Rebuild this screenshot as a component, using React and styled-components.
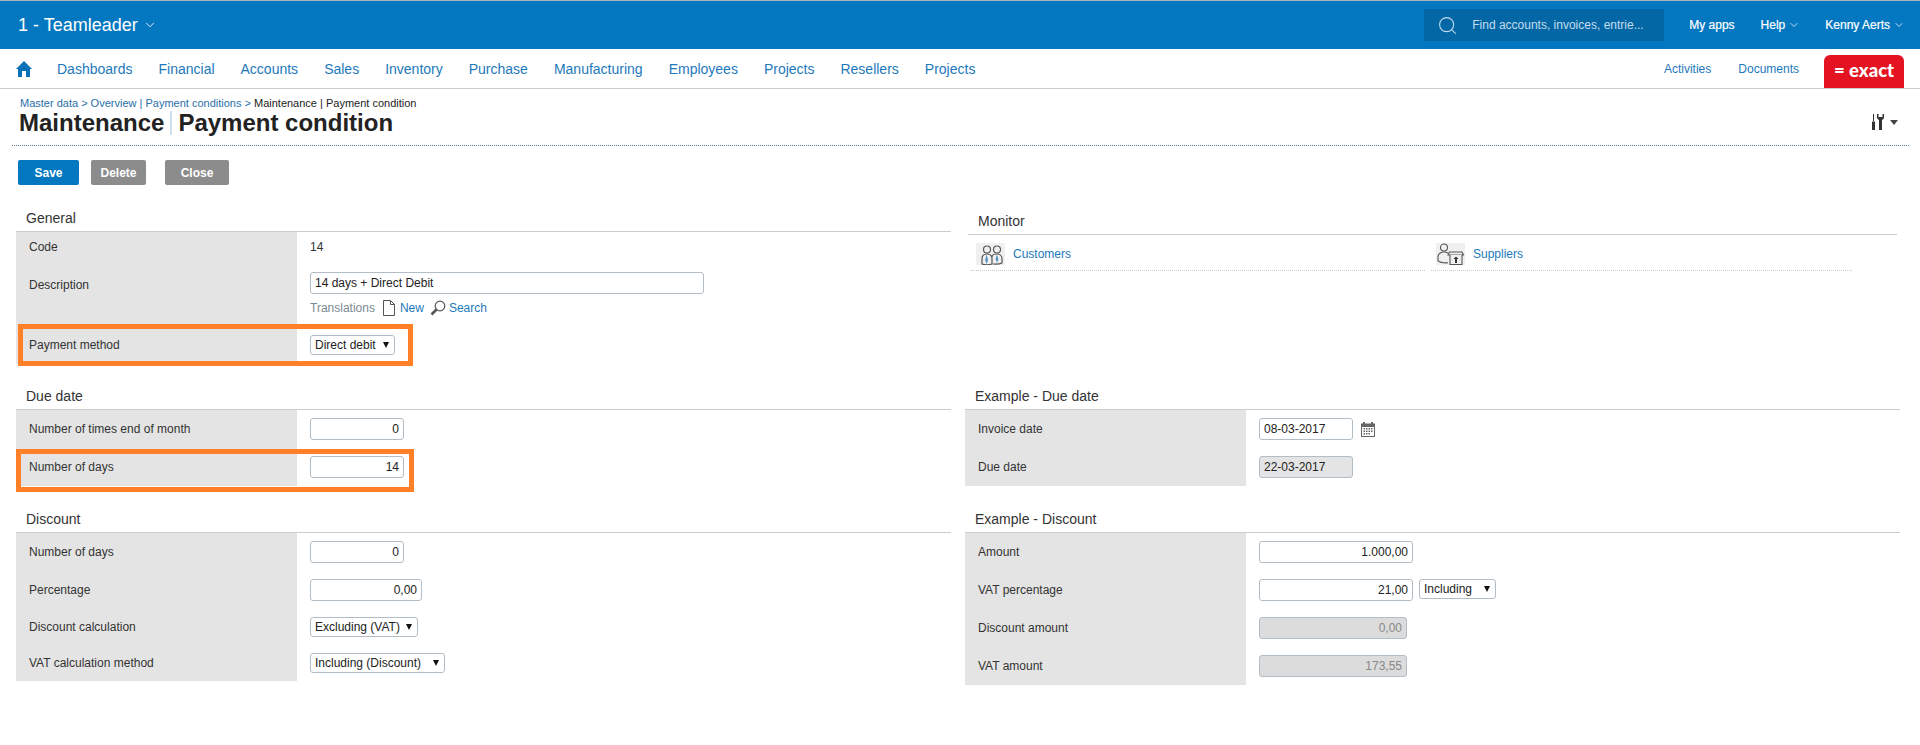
import styled, { createGlobalStyle } from "styled-components"
import { ChevronDown, Search } from "lucide-react"

const GlobalStyle = createGlobalStyle`
html, body {
  margin: 0;
  background: #fff;
  font-family: "Liberation Sans", Arial, sans-serif;
  color: #333;
}
* { box-sizing: border-box; }
`

const TopBar = styled.header`
  display: flex;
  align-items: center;
  height: 49px;
  padding: 0 15px 0 18px;
  background: #0377bf;
  border-top: 1px solid #aab4ba;
  color: #fff;
`
const Company = styled.div`
  display: flex;
  align-items: center;
  gap: 5px;
  font-size: 18px;
  flex: 1;
`
const SearchBox = styled.div`
  display: flex;
  align-items: center;
  gap: 14px;
  width: 240px;
  height: 32px;
  padding-left: 13px;
  background: #0367a6;
  color: #c4dcec;
  font-size: 12px;
`
const TopLink = styled.a`
  display: flex;
  align-items: center;
  gap: 3px;
  margin-left: ${({ $left }) => $left}px;
  font-size: 12px;
  font-weight: 400;
  -webkit-text-stroke: 0.2px #fff;
`

const NavBar = styled.nav`
  display: flex;
  height: 40px;
  padding: 0 16px;
  border-bottom: 1px solid #ccc;
  background: #fff;
`
const NavItems = styled.div`
  display: flex;
  align-items: center;
  gap: 26px;
  flex: 1;
`
const HomeLink = styled.a`
  display: flex;
  width: 16px;
  margin-right: -1px;
`
const NavLink = styled.a`
  color: #1d79bb;
  font-size: 14px;
`
const NavRight = styled.div`
  display: flex;
  align-items: center;
  gap: 27px;
  margin-right: 25px;
`
const SmallNavLink = styled.a`
  color: #1d79bb;
  font-size: 12px;
`
const ExactLogo = styled.div`
  align-self: flex-end;
  width: 80px;
  height: 33px;
  border-radius: 6px 6px 0 0;
  background: #e31322;
  color: #fff;
  font-family: "Lato", "Liberation Sans", sans-serif;
  font-weight: 900;
  font-size: 18.5px;
  line-height: 31px;
  text-align: center;
  white-space: pre;
`

const PageHead = styled.div`
  display: flex;
  justify-content: space-between;
  margin: 0 11px 0 12px;
  padding: 7px 11px 9px 8px;
  border-bottom: 1px dotted #5f7f95;
`
const Crumbs = styled.div`
  font-size: 11px;
  line-height: 14px;
  color: #222;
`
const CrumbLink = styled.a`
  color: #2a6fa8;
`
const Title = styled.h1`
  display: flex;
  align-items: center;
  margin: 0 0 0 -1px;
  font-size: 24px;
  line-height: 26px;
  font-weight: 700;
  color: #222;
`
const TitleBar = styled.span`
  width: 2px;
  height: 24px;
  margin: 0 6px;
  background: #cfdfeb;
`
const ToolsButton = styled.div`
  display: flex;
  align-items: center;
  gap: 6px;
  height: 16px;
  margin-top: 18px;
`
const Caret = styled.span`
  width: 0;
  height: 0;
  border-left: 4px solid transparent;
  border-right: 4px solid transparent;
  border-top: 5px solid #444;
`

const ButtonRow = styled.div`
  display: flex;
  padding: 14px 0 0 18px;
`
const Button = styled.button`
  width: ${({ $width }) => $width}px;
  height: 25px;
  margin-left: ${({ $left }) => $left || 0}px;
  border: 0;
  border-radius: 2px;
  background: ${({ $primary }) => ($primary ? "#0377bf" : "#8c8c8c")};
  color: #fff;
  font-family: inherit;
  font-size: 12px;
  font-weight: 700;
`

const Columns = styled.main`
  display: grid;
  grid-template-columns: 935px 935px;
  grid-template-rows: 178px 123px auto;
  column-gap: 14px;
  margin-top: 19px;
  padding-left: 16px;
`
const Section = styled.section`
  margin: ${({ $inset }) => ($inset ? "2px 3px 0" : "0")};
`
const SectionTitle = styled.h2`
  margin: 0;
  height: ${({ $tall }) => ($tall ? 29 : 28)}px;
  padding-left: 10px;
  border-bottom: 1px solid #ccc;
  font-size: 14px;
  line-height: ${({ $tall }) => ($tall ? 30 : 29)}px;
  font-weight: 400;
  color: #333;
`
const Row = styled.div`
  position: relative;
  display: flex;
  height: ${({ $height }) => $height || 38}px;
`
const Label = styled.div`
  display: flex;
  align-items: ${({ $top }) => ($top ? "flex-start" : "center")};
  width: 281px;
  padding: ${({ $top }) => $top || 0}px 0 0 13px;
  background: #e4e4e4;
  font-size: 12px;
  color: #333;
`
const Value = styled.div`
  padding-left: 13px;
  flex: 1;
  display: flex;
  align-items: ${({ $top }) => ($top ? "flex-start" : "center")};
  flex-direction: ${({ $stack }) => ($stack ? "column" : "row")};
  padding-top: ${({ $top }) => $top || 0}px;
  font-size: 12px;
  color: #333;
`
const Input = styled.input`
  width: ${({ $width }) => $width}px;
  height: 22px;
  padding: 0 4px;
  border: 1px solid #b3bdc5;
  border-radius: 3px;
  background: ${({ $disabled, $dark }) => ($dark ? "#e4e4e4" : $disabled ? "#dcdcdc" : "#fff")};
  color: ${({ $disabled }) => ($disabled ? "#888" : "#222")};
  font-family: inherit;
  font-size: 12px;
  text-align: ${({ $right }) => ($right ? "right" : "left")};
  outline: 0;
`
const SelectWrap = styled.span`
  position: relative;
  display: inline-flex;
  margin: ${({ $margin }) => $margin || 0};
  &::after {
    content: "";
    position: absolute;
    top: 7px;
    right: 6px;
    border-left: 3.5px solid transparent;
    border-right: 3.5px solid transparent;
    border-top: 6px solid #111;
    pointer-events: none;
  }
`
const SelectBox = styled.select`
  width: ${({ $width }) => $width}px;
  height: 20px;
  padding: 0 0 0 4px;
  border: 1px solid #b3bdc5;
  border-radius: 3px;
  background: #fff;
  appearance: none;
  color: #222;
  font-family: inherit;
  font-size: 12px;
  outline: 0;
`
const Translations = styled.div`
  display: flex;
  align-items: center;
  height: 14px;
  margin-top: 7px;
  font-size: 12px;
  color: #7d8a93;
`
const BlueLink = styled.a`
  color: #1d79bb;
  font-size: ${({ $size }) => $size || 12}px;
`
const TranslateIcon = styled.svg`
  flex: none;
  margin: ${({ $margin }) => $margin};
`
const Highlight = styled.div`
  position: absolute;
  left: ${({ $x }) => $x}px;
  top: ${({ $y }) => $y}px;
  width: ${({ $w }) => $w}px;
  height: ${({ $h }) => $h}px;
  border: 5px solid #ff8027;
  pointer-events: none;
`
const MonitorGrid = styled.div`
  display: grid;
  grid-template-columns: 454px 421px;
  column-gap: 6px;
  margin-left: 3px;
`
const MonitorItem = styled.a`
  display: flex;
  align-items: center;
  gap: 8px;
  padding: 8px 0 5px 5px;
  border-bottom: 1px dotted #ccc;
  color: #1d79bb;
  font-size: 12px;
`
const MonitorIcon = styled.span`
  display: flex;
  width: 29px;
  height: 22px;
  background: #f0f0f0;
`
const CalendarWrap = styled.span`
  display: flex;
  margin-left: 7px;
`

const HomeIcon = () => (
  <svg width="16" height="16" viewBox="0 0 16 16" fill="#0a70b8">
    <path d="M8 0 16 8H14V16H10V10H6V16H2V8H0Z" />
  </svg>
)

const ToolsIcon = () => (
  <svg width="12" height="16" viewBox="0 0 12 16" fill="#333">
    <path d="M1 0H2V7H1ZM0 7.5H3V16H0Z" />
    <path d="M5 0V3C5 4.5 6 5.5 7 6V16H10V6C11 5.5 12 4.5 12 3V0L10.5 0V3H6.5V0Z" />
  </svg>
)

const CustomersIcon = () => (
  <svg width="29" height="22" viewBox="0 0 29 22" fill="none" stroke="#555" strokeWidth="1.2">
    <circle cx="11" cy="6.5" r="3.5" />
    <circle cx="21" cy="6.5" r="3.5" />
    <path d="M16 14C16 12 18.5 11 21 11S26 12.5 26 15.5V20C24 21 21 21.3 17 21" />
    <path d="M6 21V16C6 12.5 8.5 11 11 11S16 12.5 16 16V21C13 22 9 22 6 21Z" fill="#f0f0f0" />
    <path d="M10.6 11.5 12 17 10.6 21 9.2 17Z" fill="#4d90c4" stroke="none" />
    <path d="M21 11.5 22.3 16 21 20 19.7 16Z" fill="#4d90c4" stroke="none" />
  </svg>
)

const SuppliersIcon = () => (
  <svg width="29" height="22" viewBox="0 0 29 22" fill="none" stroke="#555" strokeWidth="1.1">
    <circle cx="8" cy="4.5" r="3.5" />
    <path d="M2 18V14C2 10.5 5 9 8 9C9.5 9 11 9.5 12 10.3" />
    <path d="M2 18C4 19.5 8 20 12 19.8" />
    <path d="M13.5 9H26L27.5 12H12Z" fill="#f0f0f0" />
    <path d="M14 12V21.5H26V12" fill="#f0f0f0" />
    <path d="M20 13.5 22.5 16H21V20H19V16H17.5Z" fill="#333" stroke="none" />
  </svg>
)

const DocIcon = () => (
  <TranslateIcon $margin="0 5px 0 8px" width="12" height="16" viewBox="0 0 12 16" fill="none" stroke="#555">
    <path d="M.5.5H7.5L11.5 4.5V15.5H.5Z" />
    <path d="M7.5.5V4.5H11.5" />
  </TranslateIcon>
)

const MagnifierIcon = () => (
  <TranslateIcon $margin="0 3px 0 6px" width="16" height="16" viewBox="0 0 16 16" fill="none">
    <circle cx="10" cy="6" r="4.8" stroke="#555" strokeWidth="1.2" />
    <path d="M6.5 9.5 1.5 14.5" stroke="#555" strokeWidth="2.6" />
  </TranslateIcon>
)

const CalendarIcon = () => (
  <svg width="16" height="16" viewBox="0 0 16 16" fill="#666">
    <path d="M1 2.5H3V1H5V2.5H11V1H13V2.5H15V16H1ZM2 6V15H14V6Z" />
    <path d="M3.5 7H5V8.5H3.5ZM6 7H7.5V8.5H6ZM8.5 7H10V8.5H8.5ZM11 7H12.5V8.5H11ZM3.5 9.5H5V11H3.5ZM6 9.5H7.5V11H6ZM8.5 9.5H10V11H8.5ZM11 9.5H12.5V11H11ZM3.5 12H5V13.5H3.5ZM6 12H7.5V13.5H6ZM8.5 12H10V13.5H8.5Z" />
  </svg>
)

const Select = ({ value, width, margin }) => (
  <SelectWrap $margin={margin}>
    <SelectBox $width={width} defaultValue={value}>
      <option>{value}</option>
    </SelectBox>
  </SelectWrap>
)

const navItems = ["Dashboards", "Financial", "Accounts", "Sales", "Inventory", "Purchase", "Manufacturing", "Employees", "Projects", "Resellers", "Projects"]

const App = () => {
  return (
    <div>
      <GlobalStyle />
      <TopBar>
        <Company>
          1 - Teamleader
          <ChevronDown size={14} strokeWidth={1.5} />
        </Company>
        <SearchBox>
          <Search size={21} strokeWidth={1.2} />
          Find accounts, invoices, entrie...
        </SearchBox>
        <TopLink $left={25}>My apps</TopLink>
        <TopLink $left={26}>Help <ChevronDown size={12} strokeWidth={1.5} /></TopLink>
        <TopLink $left={25}>Kenny Aerts <ChevronDown size={12} strokeWidth={1.5} /></TopLink>
      </TopBar>

      <NavBar>
        <NavItems>
          <HomeLink><HomeIcon /></HomeLink>
          {navItems.map((item, i) => (
            <NavLink key={i}>{item}</NavLink>
          ))}
        </NavItems>
        <NavRight>
          <SmallNavLink>Activities</SmallNavLink>
          <SmallNavLink>Documents</SmallNavLink>
        </NavRight>
        <ExactLogo>= exact</ExactLogo>
      </NavBar>

      <PageHead>
        <div>
          <Crumbs>
            <CrumbLink>Master data &gt; Overview | Payment conditions &gt;</CrumbLink> Maintenance | Payment condition
          </Crumbs>
          <Title>Maintenance<TitleBar />Payment condition</Title>
        </div>
        <ToolsButton>
          <ToolsIcon />
          <Caret />
        </ToolsButton>
      </PageHead>

      <ButtonRow>
        <Button $primary $width={61}>Save</Button>
        <Button $width={55} $left={12}>Delete</Button>
        <Button $width={64} $left={19}>Close</Button>
      </ButtonRow>

      <Columns>
        <Section>
          <SectionTitle>General</SectionTitle>
          <Row $height={30}>
            <Label>Code</Label>
            <Value>14</Value>
          </Row>
          <Row $height={64}>
            <Label $top={16}>Description</Label>
            <Value $stack $top={10}>
              <Input $width={394} defaultValue="14 days + Direct Debit" />
              <Translations>
                Translations
                <DocIcon />
                <BlueLink>New</BlueLink>
                <MagnifierIcon />
                <BlueLink>Search</BlueLink>
              </Translations>
            </Value>
          </Row>
          <Row>
            <Label>Payment method</Label>
            <Value><Select value="Direct debit" width={85} /></Value>
            <Highlight $x={2} $y={-2} $w={395} $h={42} />
          </Row>
        </Section>

        <Section $inset>
          <SectionTitle $tall>Monitor</SectionTitle>
          <MonitorGrid>
            <MonitorItem>
              <MonitorIcon><CustomersIcon /></MonitorIcon>
              Customers
            </MonitorItem>
            <MonitorItem>
              <MonitorIcon><SuppliersIcon /></MonitorIcon>
              Suppliers
            </MonitorItem>
          </MonitorGrid>
        </Section>

        <Section>
          <SectionTitle>Due date</SectionTitle>
          <Row>
            <Label>Number of times end of month</Label>
            <Value><Input $right $width={94} defaultValue="0" /></Value>
          </Row>
          <Row>
            <Label>Number of days</Label>
            <Value><Input $right $width={94} defaultValue="14" /></Value>
            <Highlight $x={0} $y={1} $w={398} $h={43} />
          </Row>
        </Section>

        <Section>
          <SectionTitle>Example - Due date</SectionTitle>
          <Row>
            <Label>Invoice date</Label>
            <Value>
              <Input $width={94} defaultValue="08-03-2017" />
              <CalendarWrap><CalendarIcon /></CalendarWrap>
            </Value>
          </Row>
          <Row>
            <Label>Due date</Label>
            <Value><Input $dark $width={94} defaultValue="22-03-2017" readOnly /></Value>
          </Row>
        </Section>

        <Section>
          <SectionTitle>Discount</SectionTitle>
          <Row>
            <Label>Number of days</Label>
            <Value><Input $right $width={94} defaultValue="0" /></Value>
          </Row>
          <Row>
            <Label>Percentage</Label>
            <Value><Input $right $width={112} defaultValue="0,00" /></Value>
          </Row>
          <Row $height={36}>
            <Label>Discount calculation</Label>
            <Value><Select value="Excluding (VAT)" width={108} /></Value>
          </Row>
          <Row $height={36}>
            <Label>VAT calculation method</Label>
            <Value><Select value="Including (Discount)" width={135} /></Value>
          </Row>
        </Section>

        <Section>
          <SectionTitle>Example - Discount</SectionTitle>
          <Row>
            <Label>Amount</Label>
            <Value><Input $right $width={154} defaultValue="1.000,00" /></Value>
          </Row>
          <Row>
            <Label>VAT percentage</Label>
            <Value>
              <Input $right $width={154} defaultValue="21,00" />
              <Select value="Including" width={77} margin="-2px 0 0 6px" />
            </Value>
          </Row>
          <Row>
            <Label>Discount amount</Label>
            <Value><Input $right $disabled $width={148} defaultValue="0,00" readOnly /></Value>
          </Row>
          <Row>
            <Label>VAT amount</Label>
            <Value><Input $right $disabled $width={148} defaultValue="173,55" readOnly /></Value>
          </Row>
        </Section>
      </Columns>
    </div>
  )
}

export default App
